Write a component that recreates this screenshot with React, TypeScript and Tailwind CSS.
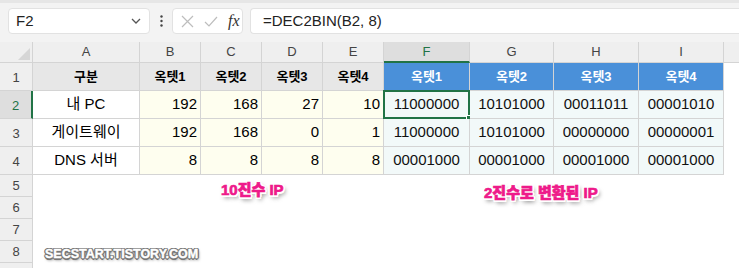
import React from "react";

const font = { fontFamily: '"Liberation Sans", "Noto Sans CJK KR", sans-serif' };

const cols = ["A", "B", "C", "D", "E", "F", "G", "H", "I"];

type Row = { a: string; dec: string[]; bin: string[] };
const rows: Row[] = [
  { a: "내 PC", dec: ["192", "168", "27", "10"], bin: ["11000000", "10101000", "00011011", "00001010"] },
  { a: "게이트웨이", dec: ["192", "168", "0", "1"], bin: ["11000000", "10101000", "00000000", "00000001"] },
  { a: "DNS 서버", dec: ["8", "8", "8", "8"], bin: ["00001000", "00001000", "00001000", "00001000"] },
];

const pinkShadow =
  "-1px -1px 0 #fff, 1px -1px 0 #fff, -1px 1px 0 #fff, 1px 1px 0 #fff, 0 -2px 0 #fff, 0 2px 0 #fff, -2px 0 0 #fff, 2px 0 0 #fff, -1.5px -1.5px 0 #fff, 1.5px 1.5px 0 #fff, 1.5px -1.5px 0 #fff, -1.5px 1.5px 0 #fff, 2px 3px 4px rgba(0,0,0,0.55)";
const grayShadow =
  "-1px -1px 0 #777, 1px -1px 0 #777, -1px 1px 0 #777, 1px 1px 0 #777, 0 -1.5px 0 #777, 0 1.5px 0 #777, -1.5px 0 0 #777, 1.5px 0 0 #777, 1px 2px 3px rgba(0,0,0,0.6)";

export default function App() {
  return (
    <div className="relative w-[739px] h-[268px] overflow-hidden bg-white text-black" style={font}>
      {/* formula bar */}
      <div className="h-[42px] bg-[#f3f3f3] border-t-[3px] border-[#e6e6e6] flex items-start pt-[5px] pl-[8px]">
        <div className="w-[142px] h-[26px] bg-white rounded-[4px] border border-[#e2e2e2] flex items-center justify-between pl-[7px] pr-[8px]">
          <span className="text-[15px] text-[#222]">F2</span>
          <svg width="10" height="6" viewBox="0 0 10 6">
            <path d="M1 1 L5 5 L9 1" stroke="#555" strokeWidth="1.3" fill="none" />
          </svg>
        </div>
        <div className="w-[22px] h-[26px] flex items-center justify-center">
          <svg width="3" height="12" viewBox="0 0 3 12">
            <circle cx="1.5" cy="1.5" r="1.2" fill="#444" />
            <circle cx="1.5" cy="6" r="1.2" fill="#444" />
            <circle cx="1.5" cy="10.5" r="1.2" fill="#444" />
          </svg>
        </div>
        <div className="w-[71px] h-[26px] bg-white rounded-[4px] border border-[#e2e2e2] flex items-center pl-[8px] gap-[10px]">
          <svg width="13" height="13" viewBox="0 0 13 13">
            <path d="M1 1 L12 12 M12 1 L1 12" stroke="#bdbdbd" strokeWidth="1.2" fill="none" />
          </svg>
          <svg width="14" height="11" viewBox="0 0 14 11">
            <path d="M1 6 L5 10 L13 1" stroke="#bdbdbd" strokeWidth="1.2" fill="none" />
          </svg>
          <span className="text-[16px] italic text-[#333]" style={{ fontFamily: '"Liberation Serif", serif' }}>
            fx
          </span>
        </div>
        <div className="ml-[7px] flex-1 h-[26px] bg-white rounded-l-[4px] border border-r-0 border-[#e2e2e2] flex items-center pl-[12px]">
          <span className="text-[15px] text-[#222]">=DEC2BIN(B2, 8)</span>
        </div>
      </div>

      {/* sheet grid */}
      <div className="grid grid-cols-[33px_107px_61px_61px_61px_61px_86px_84px_85px_85px_1fr] grid-rows-[21px_28px_28px_28px_28px_22px_22px_22px_22px_22px]">
        {/* header row */}
        <div className="relative bg-[#efefef] border-r border-b border-[#d4d4d4]">
          <svg className="absolute right-[2px] bottom-[2px]" width="12" height="12" viewBox="0 0 12 12">
            <path d="M12 0 L12 12 L0 12 Z" fill="#d6d6d6" />
          </svg>
        </div>
        {cols.map((c) =>
          c === "F" ? (
            <div
              key={c}
              className="bg-[#dedede] border-r border-[#d4d4d4] border-b-2 border-b-[#217346] flex items-center justify-center text-[13px] text-[#217346]"
            >
              {c}
            </div>
          ) : (
            <div
              key={c}
              className="bg-[#efefef] border-r border-b border-[#d4d4d4] flex items-center justify-center text-[13px] text-[#444]"
            >
              {c}
            </div>
          )
        )}
        <div className="bg-[#efefef] border-b border-[#d4d4d4]" />

        {/* row 1 */}
        <div className="bg-[#efefef] border-r border-b border-[#d4d4d4] flex items-center justify-center text-[13px] text-[#444] pt-[3px]">
          1
        </div>
        <div className="bg-[#e7e7e7] border-r border-b border-[#d4d4d4] flex items-center justify-center text-[13px] font-bold">
          구분
        </div>
        {["옥텟1", "옥텟2", "옥텟3", "옥텟4"].map((t) => (
          <div
            key={"d" + t}
            className="bg-[#e7e7e7] border-r border-b border-[#d4d4d4] flex items-center justify-center text-[13px] font-bold"
          >
            {t}
          </div>
        ))}
        {["옥텟1", "옥텟2", "옥텟3", "옥텟4"].map((t) => (
          <div
            key={"b" + t}
            className="bg-[#4a90d9] border-r border-b border-[#d4d4d4] flex items-center justify-center text-[13px] font-bold text-white"
          >
            {t}
          </div>
        ))}
        <div className="bg-white" />

        {/* data rows */}
        {rows.map((r, i) => (
          <React.Fragment key={i}>
            {i === 0 ? (
              <div className="bg-[#dedede] border-r-2 border-r-[#217346] border-b border-[#d4d4d4] flex items-center justify-center text-[13px] text-[#217346] pt-[3px]">
                {i + 2}
              </div>
            ) : (
              <div className="bg-[#efefef] border-r border-b border-[#d4d4d4] flex items-center justify-center text-[13px] text-[#444] pt-[3px]">
                {i + 2}
              </div>
            )}
            <div className="bg-white border-r border-b border-[#d4d4d4] flex items-center justify-center text-[15px] whitespace-nowrap">
              {r.a}
            </div>
            {r.dec.map((d, j) => (
              <div
                key={"d" + j}
                className="bg-[#fefeef] border-r border-b border-[#d4d4d4] flex items-center justify-end pr-[3px] text-[15px]"
              >
                {d}
              </div>
            ))}
            {r.bin.map((b, j) => (
              <div
                key={"b" + j}
                className="relative bg-[#f2f9f9] border-r border-b border-[#d4d4d4] flex items-center justify-center text-[15px] text-[#111]"
              >
                {b}
                {i === 0 && j === 0 && (
                  <>
                    <div className="absolute left-[-1px] top-[-1px] right-[-1px] bottom-[-1px] border-2 border-[#217346]" />
                    <div className="absolute right-[-3px] bottom-[-3px] w-[6px] h-[6px] bg-[#217346] border border-white" />
                  </>
                )}
              </div>
            ))}
            <div className="bg-white" />
          </React.Fragment>
        ))}

        {/* empty rows */}
        {["5", "6", "7", "8", ""].map((n, k) => (
          <React.Fragment key={k}>
            <div className="bg-[#efefef] border-r border-b border-[#d4d4d4] flex items-center justify-center text-[13px] text-[#444]">
              {n}
            </div>
            <div className="col-span-10 bg-white" />
          </React.Fragment>
        ))}
      </div>

      {/* annotations */}
      <div
        className="absolute left-[221px] top-[182px] text-[15px] font-black text-[#ee1a8a] leading-none"
        style={{ textShadow: pinkShadow, WebkitTextStroke: "0.7px #ee1a8a" }}
      >
        10진수 IP
      </div>
      <div
        className="absolute left-[484px] top-[185px] text-[15px] font-black text-[#ee1a8a] leading-none"
        style={{ textShadow: pinkShadow, WebkitTextStroke: "0.7px #ee1a8a" }}
      >
        2진수로 변환된 IP
      </div>
      <div
        className="absolute left-[45px] top-[248px] text-[12.5px] font-bold text-white leading-none"
        style={{ textShadow: grayShadow, WebkitTextStroke: "0.4px #fff" }}
      >
        SECSTART.TISTORY.COM
      </div>
    </div>
  );
}
